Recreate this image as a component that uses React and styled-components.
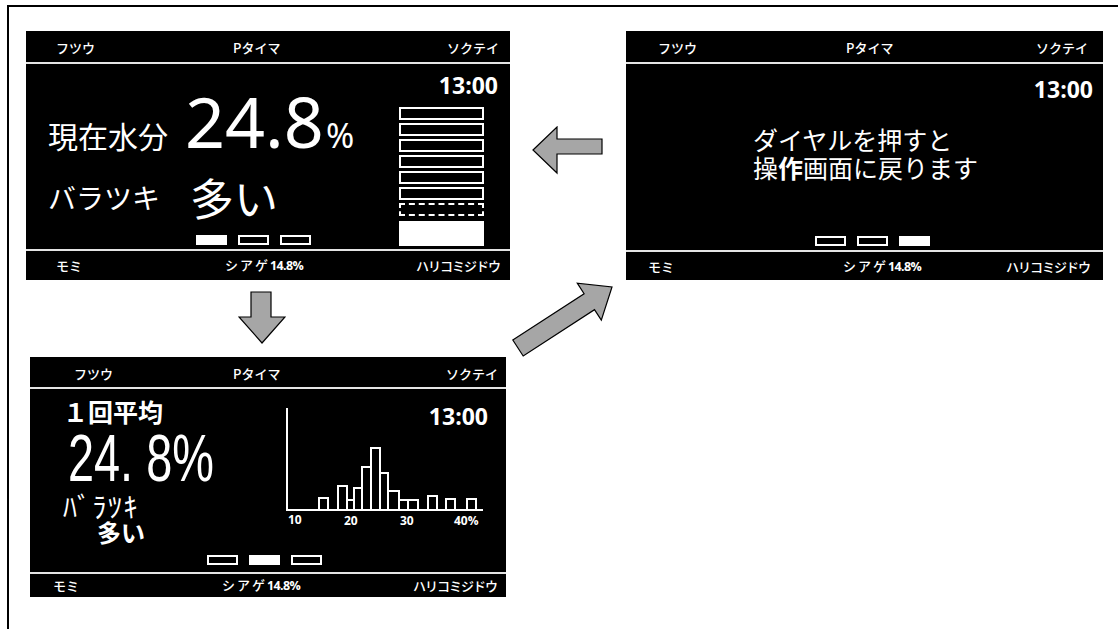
import React from 'react'
import styled, { createGlobalStyle } from 'styled-components'

const GlobalStyle = createGlobalStyle`
    html, body {
        margin: 0;
        padding: 0;
        background: #fff;
        overflow: hidden;
    }
    body {
        font-family: "Noto Sans CJK JP", "Noto Sans", sans-serif;
    }
`

const Frame = styled.div`
    margin: 5px 0 0 7px;
    width: 1111px;
    height: 624px;
    box-sizing: border-box;
    border-top: 2px solid #000;
    border-left: 2px solid #000;
    padding: 24px 0 0 17px;
    overflow: hidden;
`

const Row = styled.div`
    display: flex;
    align-items: flex-start;
`

const Column = styled.div`
    display: flex;
    flex-direction: column;
    width: ${p => p.$w}px;
`

const ArrowSlot = styled.div`
    width: ${p => p.$w}px;
    padding: ${p => p.$pt}px 0 0 ${p => p.$pl}px;
    box-sizing: border-box;
    svg { display: block; }
`

const Screen = styled.div`
    width: ${p => p.$w}px;
    height: ${p => p.$h}px;
    margin: ${p => p.$mt || 0}px 0 0 ${p => p.$ml || 0}px;
    background: #000;
    color: #fff;
    display: flex;
    flex-direction: column;
    overflow: hidden;
`

const Bar = styled.div`
    height: ${p => p.$h}px;
    box-sizing: border-box;
    display: grid;
    grid-template-columns: ${p => p.$c}px auto 1fr;
    align-items: center;
    padding: 0 ${p => p.$pr}px 0 ${p => p.$pl}px;
    font-size: 13px;
    font-weight: 500;
    line-height: 1;
    white-space: nowrap;
`

const Header = styled(Bar)`
    border-bottom: 2px solid #e4e4e4;
    padding-top: 2px;
`

const Footer = styled(Bar)`
    border-top: 2px solid #e4e4e4;
`

const Right = styled.span`
    justify-self: end;
    letter-spacing: ${p => p.$ls || 0}px;
`

const Finish = styled.span`
    letter-spacing: 2px;
    b {
        font-family: "Open Sans", sans-serif;
        font-weight: 700;
        font-size: 12.5px;
        letter-spacing: -0.6px;
    }
`

const Body = styled.div`
    flex: 1;
    display: flex;
    flex-direction: ${p => p.$dir || 'row'};
    min-height: 0;
`

const MainCol = styled.div`
    flex: ${p => (p.$w ? 'none' : 1)};
    width: ${p => (p.$w ? `${p.$w}px` : 'auto')};
    box-sizing: border-box;
    display: flex;
    flex-direction: column;
    padding-left: ${p => p.$pl}px;
`

const SideCol = styled.div`
    display: flex;
    flex-direction: column;
    align-items: flex-end;
    padding-right: ${p => p.$pr}px;
`

const Clock = styled.div`
    font-family: "Open Sans", sans-serif;
    font-weight: 700;
    font-size: 23px;
    line-height: 1;
    margin-top: ${p => p.$mt}px;
    margin-right: ${p => p.$mr || 0}px;
    align-self: flex-start;
    justify-self: end;
    margin-left: auto;
`

const ReadingRow = styled.div`
    margin-top: 22px;
    font-size: 30px;
    line-height: 1;
    white-space: nowrap;
`

const BigNum = styled.span`
    font-family: "Noto Sans", sans-serif;
    font-size: 70px;
    margin-left: 17px;
`

const Unit = styled.span`
    font-family: "Noto Sans", sans-serif;
    font-size: 34px;
    margin-left: 2px;
`

const SpreadRow = styled.div`
    display: flex;
    align-items: center;
    height: 44px;
    margin-top: 19px;
    line-height: 1;
    white-space: nowrap;
`

const SpreadLabel = styled.span`
    font-size: 28px;
`

const SpreadValue = styled.span`
    font-size: 44px;
    margin-left: 30px;
`

const Gauge = styled.div`
    display: flex;
    flex-direction: column;
    gap: 3px;
    width: 85px;
    margin: 10px 14px 0 0;
`

const GaugeCell = styled.div`
    height: ${p => (p.$kind === 'full' ? 25 : 13)}px;
    box-sizing: border-box;
    border: 2px ${p => (p.$kind === 'dashed' ? 'dashed' : 'solid')} #fff;
    background: ${p => (p.$kind === 'full' ? '#fff' : 'transparent')};
    margin-top: ${p => (p.$kind === 'full' ? 2 : 0)}px;
`

const PagerRow = styled.div`
    display: flex;
    gap: 11px;
    margin: ${p => p.$mt}px 0 0 ${p => p.$ml}px;
`

const PageDot = styled.div`
    width: 31px;
    height: 10px;
    box-sizing: border-box;
    border: 2px solid #fff;
    background: ${p => (p.$on ? '#fff' : 'transparent')};
`

const Message = styled.div`
    margin-top: 24px;
    padding-left: 127px;
    font-size: 25px;
    line-height: 28px;
    b { font-weight: 700; }
`

const AvgTitle = styled.div`
    margin-top: 10px;
    font-size: 25px;
    font-weight: 700;
    line-height: 1;
`

const CondensedNum = styled.div`
    margin: 1px 0 0 5px;
    font-family: "Liberation Sans", sans-serif;
    font-size: 66px;
    line-height: 1;
    white-space: pre;
    transform: scaleX(0.71);
    transform-origin: left center;
`

const SmallLabel = styled.div`
    margin-top: 3px;
    font-size: 28px;
    line-height: 24px;
    letter-spacing: 1.5px;
`

const SmallValue = styled.div`
    margin: 2px 0 0 34px;
    font-size: 24px;
    font-weight: 700;
    line-height: 1;
`

const ChartArea = styled.div`
    flex: 1;
    display: grid;
    align-items: start;
    svg {
        grid-area: 1 / 1;
        display: block;
        margin-top: 12px;
    }
    ${Clock} {
        grid-area: 1 / 1;
    }
`

const Content = styled.div`
    display: flex;
    height: 166px;
`

function Pager({ active, mt, ml }) {
    return (
        <PagerRow $mt={mt} $ml={ml}>
            {[0, 1, 2].map(i => <PageDot key={i} $on={i === active} />)}
        </PagerRow>
    )
}

function TopBar({ h, pl, c, pr }) {
    return (
        <Header $h={h} $pl={pl} $c={c} $pr={pr}>
            <span>フツウ</span>
            <span>Pタイマ</span>
            <Right>ソクテイ</Right>
        </Header>
    )
}

function BottomBar({ h, pl, c, pr }) {
    return (
        <Footer $h={h} $pl={pl} $c={c} $pr={pr}>
            <span>モミ</span>
            <Finish>シアゲ<b>14.8%</b></Finish>
            <Right $ls={-1}>ハリコミジドウ</Right>
        </Footer>
    )
}

const ARROW = { fill: '#a6a6a6', stroke: '#000', strokeWidth: 1.2, strokeLinejoin: 'miter' }

const bars = [
    [39, 9, 97], [58, 9, 85], [67, 7, 99], [74, 8, 87], [82, 9, 66], [91, 9, 47],
    [100, 8, 72], [108, 11, 90], [119, 9, 99], [128, 10, 99], [148, 9, 95],
    [166, 9, 98], [187, 9, 98],
]

function Histogram() {
    return (
        <svg width="210" height="130" viewBox="0 0 210 130">
            {bars.map(([x, w, top], i) => (
                <rect key={i} x={x} y={top} width={w} height={109 - top} fill="none" stroke="#fff" strokeWidth="2" />
            ))}
            <path d="M7 7 V109 H203" fill="none" stroke="#fff" strokeWidth="2" />
            <g fill="#fff" fontFamily="Open Sans, sans-serif" fontWeight="700" fontSize="12">
                <text x="8" y="123">10</text>
                <text x="64" y="124">20</text>
                <text x="120" y="124">30</text>
                <text x="174" y="124">40%</text>
            </g>
        </svg>
    )
}

export default function App() {
    return (
        <>
            <GlobalStyle />
            <Frame>
                <Row>
                    <Screen $w={484} $h={249}>
                        <TopBar h={33} pl={30} c={177} pr={11} />
                        <Body>
                            <MainCol $pl={22}>
                                <ReadingRow>
                                    <span>現在水分</span>
                                    <BigNum>24.8</BigNum>
                                    <Unit>%</Unit>
                                </ReadingRow>
                                <SpreadRow>
                                    <SpreadLabel>バラツキ</SpreadLabel>
                                    <SpreadValue>多い</SpreadValue>
                                </SpreadRow>
                                <Pager active={0} mt={16} ml={148} />
                            </MainCol>
                            <SideCol $pr={12}>
                                <Clock $mt={10}>13:00</Clock>
                                <Gauge>
                                    {[0, 1, 2, 3, 4, 5].map(i => <GaugeCell key={i} />)}
                                    <GaugeCell $kind="dashed" />
                                    <GaugeCell $kind="full" />
                                </Gauge>
                            </SideCol>
                        </Body>
                        <BottomBar h={31} pl={30} c={169} pr={10} />
                    </Screen>

                    <ArrowSlot $w={116} $pt={95} $pl={22}>
                        <svg width="72" height="49" viewBox="0 0 72 49">
                            <polygon points="1,24 25,1 25,13 70,13 70,28 25,28 25,47" {...ARROW} />
                        </svg>
                    </ArrowSlot>

                    <Screen $w={477} $h={249}>
                        <TopBar h={33} pl={32} c={188} pr={15} />
                        <Body $dir="column">
                            <Clock $mt={14} $mr={10}>13:00</Clock>
                            <Message>
                                ダイヤルを押すと<br />操<b>作</b>画面に戻ります
                            </Message>
                            <Pager active={2} mt={55} ml={189} />
                        </Body>
                        <BottomBar h={30} pl={22} c={195} pr={13} />
                    </Screen>
                </Row>

                <Row>
                    <Column $w={484}>
                        <ArrowSlot $w={260} $pt={11} $pl={212}>
                            <svg width="48" height="54" viewBox="0 0 48 54">
                                <polygon points="13,1 33,1 33,26 47,26 24,52 1,26 13,26" {...ARROW} />
                            </svg>
                        </ArrowSlot>
                        <Screen $w={476} $h={240} $ml={4} $mt={12}>
                            <TopBar h={32} pl={44} c={159} pr={8} />
                            <Body $dir="column">
                                <Content>
                                    <MainCol $pl={33} $w={250}>
                                        <AvgTitle>１回平均</AvgTitle>
                                        <CondensedNum>24. 8%</CondensedNum>
                                        <SmallLabel>ﾊﾞﾗﾂｷ</SmallLabel>
                                        <SmallValue>多い</SmallValue>
                                    </MainCol>
                                    <ChartArea>
                                        <Histogram />
                                        <Clock $mt={16} $mr={18}>13:00</Clock>
                                    </ChartArea>
                                </Content>
                                <Pager active={1} mt={0} ml={177} />
                            </Body>
                            <BottomBar h={25} pl={23} c={169} pr={9} />
                        </Screen>
                    </Column>

                    <ArrowSlot $w={110} $pt={0} $pl={0}>
                        <svg width="110" height="80" viewBox="0 0 110 80">
                            <polygon points="2.8,60 74.1,13.7 67.3,3.2 102,7 91.3,40.2 84.5,29.7 13.2,76" {...ARROW} />
                        </svg>
                    </ArrowSlot>
                </Row>
            </Frame>
        </>
    )
}
